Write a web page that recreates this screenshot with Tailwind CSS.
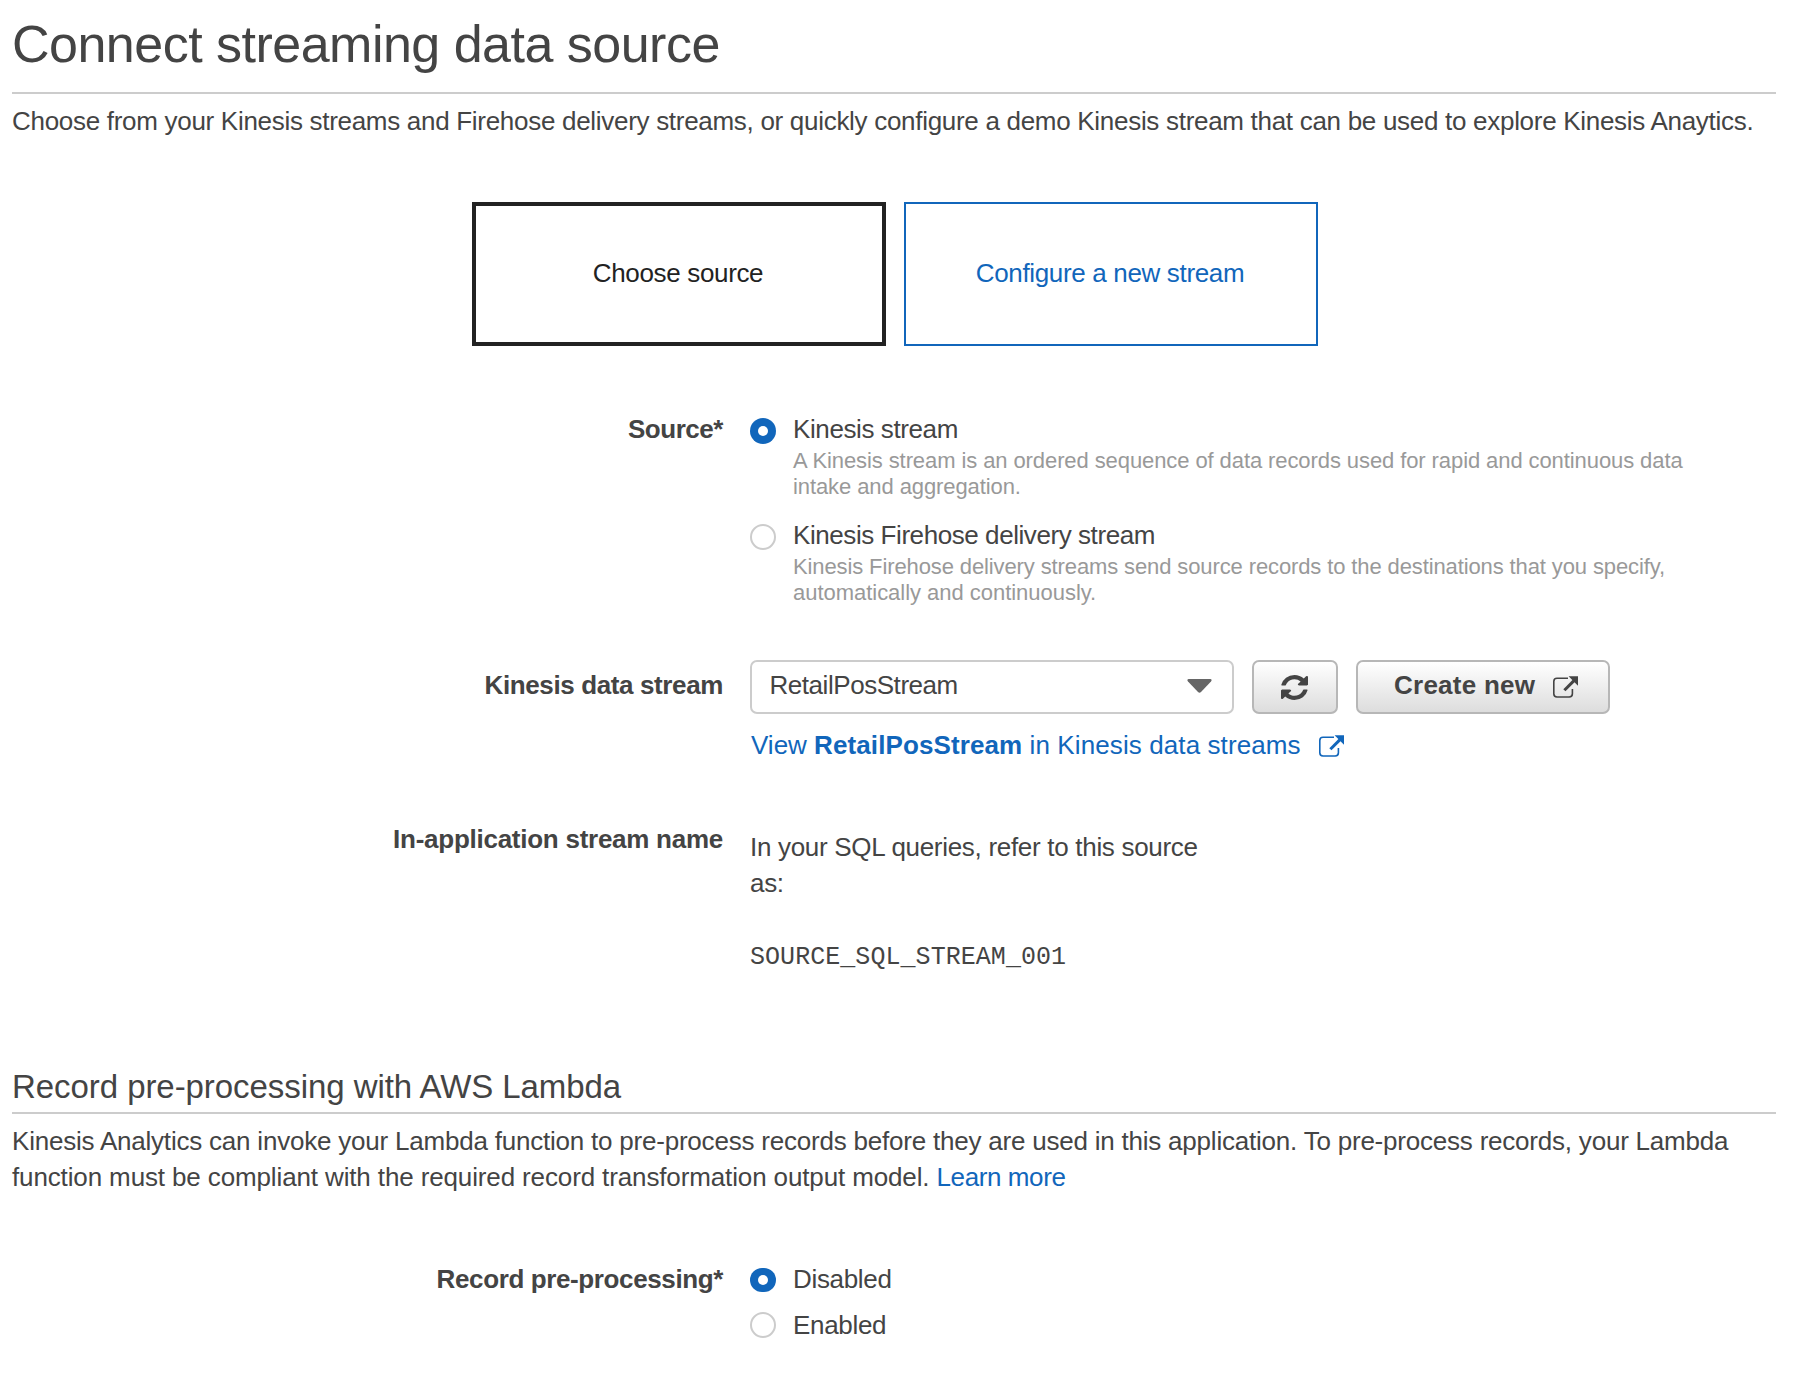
<!DOCTYPE html>
<html lang="en">
<head>
<meta charset="utf-8">
<title>Connect streaming data source</title>
<script src="https://cdn.jsdelivr.net/npm/@tailwindcss/browser@4"></script>
</head>
<body class="bg-white font-['Liberation_Sans',Arial,sans-serif] text-[26px] leading-[30px] text-[#444]">
<svg class="hidden">
  <symbol id="external" viewBox="0 0 25 22">
    <path d="M15 2.2H4Q.8 2.2 .8 5.4V17.8Q.8 21 4 21H16.2Q19.4 21 19.4 17.8V13" fill="none" stroke="currentColor" stroke-width="1.6"/>
    <path d="M11.4 14.2L21 4.6" stroke="currentColor" stroke-width="3"/>
    <path d="M15.6 .3H25V9.8Z" fill="currentColor"/>
  </symbol>
</svg>
<main class="ml-3 w-[1764px] pt-3.5">
  <h1 class="border-b-2 border-[#ccc] pb-[18px] text-[52px] leading-[60px] tracking-[-0.51px]">Connect streaming data source</h1>
  <p class="mt-[9px] whitespace-nowrap leading-9 tracking-[-0.295px]">Choose from your Kinesis streams and Firehose delivery streams, or quickly configure a demo Kinesis stream that can be used to explore Kinesis Anaytics.</p>

  <div class="mt-[63px] ml-[460px] flex gap-[18px] tracking-[-0.34px]">
    <button class="flex h-36 w-[414px] items-center justify-center border-4 border-[#222] pr-0.5 pb-0.5 text-[#222]">Choose source</button>
    <button class="flex h-36 w-[414px] items-center justify-center border-2 border-[#1166bb] pr-0.5 pb-0.5 text-[#1166bb]">Configure a new stream</button>
  </div>

  <section class="mt-[68px] flex gap-[27px]">
    <div class="w-[711px] text-right font-bold tracking-[-0.45px]">Source*</div>
    <div>
      <div class="flex gap-[17px] tracking-[-0.4px]">
        <span class="mt-1 flex size-[26px] items-center justify-center rounded-full bg-[#1166bb]"><span class="size-2.5 rounded-full bg-white"></span></span>
        <span>Kinesis stream</span>
      </div>
      <p class="mt-1 pl-[43px] text-[22px] leading-[26px] tracking-[-0.09px] text-[#999]">A Kinesis stream is an ordered sequence of data records used for rapid and continuous data<br>intake and aggregation.</p>
      <div class="mt-5 flex gap-[17px] tracking-[-0.43px]">
        <span class="mt-1 size-[26px] rounded-full border-2 border-[#ccc]"></span>
        <span>Kinesis Firehose delivery stream</span>
      </div>
      <p class="mt-1 pl-[43px] text-[22px] leading-[26px] tracking-[-0.115px] text-[#999]">Kinesis Firehose delivery streams send source records to the destinations that you specify,<br><span class="tracking-[-0.03px]">automatically and continuously.</span></p>
    </div>
  </section>

  <section class="mt-[54px] flex gap-[27px]">
    <div class="mt-2.5 w-[711px] text-right font-bold tracking-[-0.38px]">Kinesis data stream</div>
    <div>
      <div class="flex gap-[18px]">
        <div class="flex h-[54px] w-[484px] items-center justify-between rounded-[7px] border-2 border-[#ccc] pr-5 pb-1 pl-[17.5px] tracking-[-0.45px]">
          <span>RetailPosStream</span>
          <svg class="mt-0.5 h-3.5 w-[25px]" viewBox="0 0 25 14"><path d="M1.5 0H23.5Q25.5 .5 24 2.5L14 13Q12.5 14.5 11 13L1 2.5Q-.5 .5 1.5 0Z" fill="#666"/></svg>
        </div>
        <button class="flex h-[54px] w-[86px] items-center justify-center rounded-[7px] border-2 border-[#b7b7b7] bg-linear-to-b from-white to-[#ddd] pr-px">
          <svg class="h-[25px] w-[27px]" viewBox="0 0 1536 1536" preserveAspectRatio="none" fill="#444"><path d="M1511 928q0 5-1 7-64 268-268 434.500t-478 166.500q-146 0-282.500-55t-243.500-157l-129 129q-19 19-45 19t-45-19-19-45v-448q0-26 19-45t45-19h448q26 0 45 19t19 45-19 45l-137 137q71 66 161 102t187 36q134 0 250-65t186-179q11-17 53-117 8-23 30-23h192q13 0 22.500 9.500t9.500 22.500zm25-800v448q0 26-19 45t-45 19h-448q-26 0-45-19t-19-45 19-45l138-138q-148-137-349-137-134 0-250 65t-186 179q-11 17-53 117-8 23-30 23h-199q-13 0-22.500-9.500t-9.500-22.500v-7q65-268 270-434.500t480-166.500q146 0 284 55.500t245 156.500l130-129q19-19 45-19t45 19 19 45z"/></svg>
        </button>
        <button class="flex h-[54px] w-[254px] items-center rounded-[7px] border-2 border-[#b7b7b7] bg-linear-to-b from-white to-[#ddd] pb-1 pl-9 font-bold tracking-[0.25px]">
          <span>Create new</span>
          <svg class="ml-[18px] mt-[3px] h-[22px] w-[25px]"><use href="#external"/></svg>
        </button>
      </div>
      <a class="mt-4 ml-px flex whitespace-pre text-[#1166bb]"><span class="tracking-normal">View </span><span class="font-bold tracking-[0.1px]">RetailPosStream</span><span class="tracking-[0.1px]"> in Kinesis data streams</span><svg class="ml-[18px] mt-[5px] h-[22px] w-[25px]"><use href="#external"/></svg></a>
    </div>
  </section>

  <section class="mt-16 flex gap-[27px]">
    <div class="w-[711px] text-right font-bold tracking-[-0.26px]">In-application stream name</div>
    <div class="mt-[5px] leading-9 tracking-[-0.3px]">
      <p>In your SQL queries, refer to this source<br>as:</p>
      <p class="mt-9"><code class="font-['Liberation_Mono','Courier_New',monospace] text-[25px] leading-none tracking-[0.05px]">SOURCE_SQL_STREAM_001</code></p>
    </div>
  </section>

  <h2 class="mt-[95px] border-b-2 border-[#ccc] pb-1.5 text-[33px] leading-[38px] tracking-[-0.06px]">Record pre-processing with AWS Lambda</h2>
  <p class="mt-[9px] whitespace-nowrap leading-9 tracking-[-0.213px]">Kinesis Analytics can invoke your Lambda function to pre-process records before they are used in this application. To pre-process records, your Lambda<br><span class="tracking-[-0.13px]">function must be compliant with the required record transformation output model. <a class="tracking-[-0.4px] text-[#1166bb]">Learn more</a></span></p>

  <section class="mt-[69px] flex gap-[27px]">
    <div class="w-[711px] text-right font-bold tracking-[-0.38px]">Record pre-processing*</div>
    <div class="flex flex-col gap-4 tracking-[-0.32px]">
      <div class="flex gap-[17px]">
        <span class="mt-1 flex h-6 w-[26px] items-center justify-center rounded-full bg-[#1166bb]"><span class="size-2.5 rounded-full bg-white"></span></span>
        <span>Disabled</span>
      </div>
      <div class="flex gap-[17px]">
        <span class="mt-0.5 size-[26px] rounded-full border-2 border-[#ccc]"></span>
        <span>Enabled</span>
      </div>
    </div>
  </section>
</main>
</body>
</html>
